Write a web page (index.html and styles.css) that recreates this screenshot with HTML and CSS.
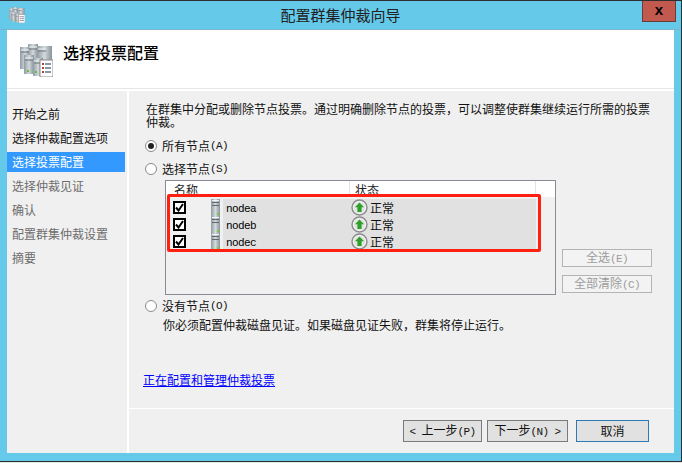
FILE: index.html
```html
<!DOCTYPE html>
<html lang="zh-CN">
<head>
  <meta charset="UTF-8" />
  <title>配置群集仲裁向导</title>
  <link rel="stylesheet" href="styles.css">
</head>
<body>

  <svg class="defs" width="0" height="0">
    <defs>
      <linearGradient id="metal" x1="0" x2="1" y1="0" y2="0">
        <stop offset="0" stop-color="#8f9ba3"/>
        <stop offset="0.5" stop-color="#d3d9dc"/>
        <stop offset="1" stop-color="#87929a"/>
      </linearGradient>
      <symbol id="server" viewBox="0 0 9 17">
        <rect width="9" height="17" fill="url(#metal)"/>
        <rect x="1" y="1" width="7" height="1" fill="#f2f4f5"/>
        <rect x="1" y="3" width="7" height="1" fill="#5f6a72"/>
        <rect x="1" y="6" width="7" height="1" fill="#5f6a72"/>
        <rect x="6" y="14" width="2" height="2" fill="#6fd02c"/>
      </symbol>
      <symbol id="up" viewBox="0 0 17 17">
        <circle cx="8.5" cy="8.5" r="7.5" fill="#f1f1f1" stroke="#8b8b8b" stroke-width="1.4"/>
        <circle cx="8.5" cy="8.5" r="5.6" fill="#dfe6df"/>
        <path d="M8.5 3.4 13 8.2H10.6V13H6.4V8.2H4Z" fill="#2f9e2a"/>
      </symbol>
      <symbol id="cluster" viewBox="0 0 33 33">
        <rect x="0" y="3" width="10" height="22" fill="url(#metal)"/>
        <rect x="8" y="0" width="10" height="22" fill="url(#metal)"/>
        <rect x="17" y="2" width="15" height="22" fill="url(#metal)"/>
        <rect x="4" y="11" width="10" height="19" fill="url(#metal)"/>
        <rect x="13" y="14" width="10" height="18" fill="url(#metal)"/>
        <path d="M1 6H9M9 3H17M18 5H26M5 14H13M14 17H22" stroke="#eef1f2"/>
        <path d="M1 8H9M9 5H17M18 7H26M5 16H13M14 19H22" stroke="#6b757c"/>
        <rect x="7" y="26" width="2" height="2" fill="#63c52a"/>
        <rect x="15" y="27" width="2" height="2" fill="#63c52a"/>
        <rect x="20" y="16" width="13" height="17" fill="#fff" stroke="#8b8b8b"/>
        <path d="M22 20H24M22 24H24M22 28H24" stroke="#b5403a" stroke-width="2"/>
        <path d="M25 20H31M25 24H31M25 28H31" stroke="#8a94a8" stroke-width="2"/>
      </symbol>
    </defs>
  </svg>

  <div class="window">
    <div class="titlebar">
      <svg class="title-icon"><use href="#cluster"/></svg>
      <span class="title">配置群集仲裁向导</span>
      <div class="close">x</div>
    </div>

    <div class="client">
      <div class="header">
        <svg class="header-icon"><use href="#cluster"/></svg>
        <h1>选择投票配置</h1>
      </div>

      <div class="body">
        <ul class="nav">
          <li>开始之前</li>
          <li>选择仲裁配置选项</li>
          <li class="active">选择投票配置</li>
          <li class="off">选择仲裁见证</li>
          <li class="off">确认</li>
          <li class="off">配置群集仲裁设置</li>
          <li class="off">摘要</li>
        </ul>

        <div class="main">
          <div class="content">
            <p class="intro">在群集中分配或删除节点投票。通过明确删除节点的投票，可以调整使群集继续运行所需的投票<br>仲裁。</p>

            <div class="radio-row first"><span class="radio checked"></span>所有节点<span class="en">(A)</span></div>
            <div class="radio-row"><span class="radio"></span>选择节点<span class="en">(S)</span></div>

            <div class="picker">
              <div class="list">
                <div class="list-head">
                  <div class="col-name">名称</div>
                  <div class="col-state">状态</div>
                  <div class="col-fill"></div>
                </div>
                <div class="list-row">
                  <span class="check"><svg viewBox="0 0 9 9"><path d="M1 4.5 3.5 7.5 8 1" fill="none" stroke="#000" stroke-width="2"/></svg></span>
                  <svg class="node-icon"><use href="#server"/></svg>
                  <span class="node">nodea</span>
                  <svg class="state-icon"><use href="#up"/></svg>
                  <span>正常</span>
                </div>
                <div class="list-row">
                  <span class="check"><svg viewBox="0 0 9 9"><path d="M1 4.5 3.5 7.5 8 1" fill="none" stroke="#000" stroke-width="2"/></svg></span>
                  <svg class="node-icon"><use href="#server"/></svg>
                  <span class="node">nodeb</span>
                  <svg class="state-icon"><use href="#up"/></svg>
                  <span>正常</span>
                </div>
                <div class="list-row">
                  <span class="check"><svg viewBox="0 0 9 9"><path d="M1 4.5 3.5 7.5 8 1" fill="none" stroke="#000" stroke-width="2"/></svg></span>
                  <svg class="node-icon"><use href="#server"/></svg>
                  <span class="node">nodec</span>
                  <svg class="state-icon"><use href="#up"/></svg>
                  <span>正常</span>
                </div>
                <div class="mark"></div>
              </div>
              <div class="side-buttons">
                <button class="btn-off">全选<span class="en">(E)</span></button>
                <button class="btn-off">全部清除<span class="en">(C)</span></button>
              </div>
            </div>

            <div class="radio-row none"><span class="radio"></span>没有节点<span class="en">(O)</span></div>
            <p class="note">你必须配置仲裁磁盘见证。如果磁盘见证失败，群集将停止运行。</p>
            <a class="link" href="#">正在配置和管理仲裁投票</a>
          </div>

          <div class="footer">
            <button class="btn prev"><span class="en">&lt; </span>上一步<span class="en">(P)</span></button>
            <button class="btn next">下一步<span class="en">(N) &gt;</span></button>
            <button class="btn cancel">取消</button>
          </div>
        </div>
      </div>
    </div>
  </div>

</body>
</html>
```

FILE: styles.css
```css
* {
  box-sizing: border-box;
}

html, body {
  margin: 0;
  height: 100%;
  overflow: hidden;
}

body {
  background-color: #e9e9e9;
  color: #111;
  font-family: "Noto Sans CJK SC", "Liberation Sans", sans-serif;
  font-size: 12px;
}

.defs {
  display: block;
  height: 0;
}

.en {
  font-family: "Liberation Mono", monospace;
  font-size: 11px;
  letter-spacing: -0.6px;
  white-space: pre;
}

.window {
  width: 682px;
  height: 462px;
  background: #65c9ea;
  border-top: 1px solid #2b2f33;
  border-right: 1px solid #2b2f33;
  border-bottom: 1px solid #2b2f33;
  display: flex;
  flex-direction: column;
}

.titlebar {
  position: relative;
  height: 29px;
  flex: none;
  display: flex;
  align-items: center;
  justify-content: center;
  border-bottom: 1px solid #7cb3cf;
}

.title-icon {
  position: absolute;
  left: 9px;
  top: 6px;
  width: 16px;
  height: 16px;
}

.title {
  color: #222;
  font-size: 15px;
  margin-top: -2px;
}

.close {
  position: absolute;
  right: 5px;
  top: 0;
  width: 34px;
  height: 21px;
  background: #c1594f;
  border: 1px solid #6b3b3a;
  border-top: none;
  color: #000;
  font-family: "Liberation Sans", sans-serif;
  font-size: 15px;
  font-weight: bold;
  line-height: 17px;
  text-align: center;
}

.client {
  margin: 0 7px;
  height: 423px;
  background: #fff;
  display: flex;
  flex-direction: column;
}

.header {
  height: 59px;
  flex: none;
  display: flex;
  align-items: center;
  padding-left: 13px;
  padding-top: 3px;
  border-bottom: 1px solid #e6e6e6;
}

.header-icon {
  width: 33px;
  height: 33px;
}

h1 {
  margin: -18px 0 0 10px;
  font-size: 16px;
  font-weight: 500;
  color: #000;
}

.body {
  flex: 1;
  display: flex;
  margin-top: 2px;
  gap: 2px;
}

.nav {
  width: 120px;
  flex: none;
  margin: 0;
  padding: 11px 0 0;
  list-style: none;
  background: #f0f0f0;
}

.nav li {
  height: 24px;
  line-height: 24px;
  padding-left: 5px;
  margin-right: 2px;
}

.nav li.active {
  height: 20px;
  line-height: 20px;
  margin: 2px 2px 2px 0;
  background: #3399ff;
  color: #fff;
}

.nav li.off {
  color: #6d6d6d;
}

.main {
  flex: 1;
  display: flex;
  flex-direction: column;
  background: #f0f0f0;
}

.content {
  height: 318px;
  flex: none;
  padding: 11px 0 0 17px;
  border-bottom: 1px solid #fff;
}

.intro {
  margin: 0;
  line-height: 13px;
  width: 520px;
}

.radio-row {
  display: flex;
  align-items: center;
  height: 18px;
  line-height: 18px;
  margin-left: -1px;
  margin-top: 5px;
}

.radio-row.first {
  margin-top: 9px;
}

.radio-row.none {
  margin-top: 2px;
}

.radio {
  width: 12px;
  height: 12px;
  margin-right: 5px;
  border: 1px solid #8a8a8a;
  border-radius: 50%;
  background: #fff;
  display: flex;
  align-items: center;
  justify-content: center;
}

.radio.checked::after {
  content: "";
  width: 6px;
  height: 6px;
  border-radius: 50%;
  background: #222;
}

.picker {
  display: flex;
  align-items: flex-end;
  margin-left: 19px;
  margin-top: 2px;
}

.list {
  position: relative;
  width: 391px;
  height: 115px;
  border: 1px solid #898b92;
  background: #f0f0f0;
}

.list-head {
  display: flex;
  height: 16px;
  background: #fff;
  line-height: 18px;
  color: #222;
}

.col-name {
  width: 184px;
  padding-left: 8px;
  border-right: 1px solid #e3e3e3;
}

.col-state {
  width: 186px;
  padding-left: 5px;
  border-right: 1px solid #e3e3e3;
}

.col-fill {
  flex: 1;
}

.list-row {
  display: flex;
  align-items: center;
  height: 17px;
  width: 370px;
  background: linear-gradient(to right, #f0f0f0 57px, #e1e1e1 57px);
  padding-left: 7px;
}

.list-row:nth-child(2) {
  margin-top: 2px;
}

.check {
  width: 13px;
  height: 13px;
  flex: none;
  border: 2px solid #000;
  background: #fff;
  display: flex;
}

.check svg {
  width: 9px;
  height: 9px;
}

.node-icon {
  width: 9px;
  height: 17px;
  flex: none;
  margin-left: 25px;
}

.node {
  width: 125px;
  margin-left: 6px;
  padding-top: 2px;
  font-family: "Liberation Mono", monospace;
  font-size: 11px;
  letter-spacing: -0.6px;
  color: #000;
}

.state-icon {
  width: 17px;
  height: 17px;
  flex: none;
  margin-right: 2px;
}

.mark {
  position: absolute;
  left: 1px;
  top: 13px;
  width: 374px;
  height: 58px;
  border: 3px solid #ff2012;
  border-radius: 2px;
}

.side-buttons {
  display: flex;
  flex-direction: column;
  gap: 8px;
  margin-left: 6px;
  margin-bottom: 2px;
}

button {
  font-family: inherit;
  font-size: 12px;
  padding: 0;
}

.btn-off {
  width: 90px;
  height: 18px;
  line-height: 14px;
  padding-bottom: 2px;
  border: 1px solid #b3b5b5;
  background: #f3f3f3;
  color: #9c9c9c;
}

.note {
  margin: 1px 0 0 17px;
  line-height: 18px;
}

.link {
  display: block;
  width: 132px;
  margin: 37px 0 0 -3px;
  line-height: 18px;
  color: #0000ff;
}

.footer {
  flex: 1;
  display: flex;
  align-items: flex-start;
  padding: 11px 0 0 274px;
}

.btn {
  height: 22px;
  line-height: 18px;
  background: #e1e1e1;
  border: 1px solid #7a7a7a;
  color: #111;
}

.prev {
  width: 79px;
}

.next {
  width: 81px;
  margin-left: 5px;
}

.cancel {
  width: 73px;
  margin-left: 8px;
  border-color: #2d7bb5;
}
```
